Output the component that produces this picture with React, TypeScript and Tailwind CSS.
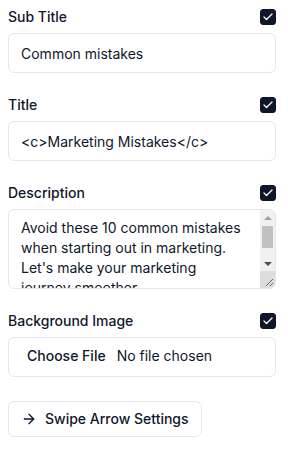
import React, { useState } from 'react';
import { ArrowRight, Check } from 'lucide-react';

function Toggle({ checked, onChange }: { checked: boolean; onChange: () => void }) {
  return (
    <button
      type="button"
      onClick={onChange}
      className={`flex h-4 w-4 items-center justify-center rounded-[3px] border border-[#0f172a] ${checked ? 'bg-[#0f172a]' : 'bg-white'}`}
    >
      {checked && <Check className="h-3 w-3 text-white" strokeWidth={2.5} />}
    </button>
  );
}

function Field({ label, children }: { label: string; children: React.ReactNode }) {
  const [on, setOn] = useState(true);
  return (
    <div className="flex flex-col gap-2">
      <div className="flex h-4 items-center justify-between">
        <span className="text-sm font-medium text-[#0f172a]">{label}</span>
        <Toggle checked={on} onChange={() => setOn(!on)} />
      </div>
      {children}
    </div>
  );
}

// drawn scrollbar, the headless browser only has overlay bars
function FakeScrollbar() {
  return (
    <div className="pointer-events-none absolute top-px right-px bottom-px flex w-[15px] flex-col overflow-hidden rounded-r-[5px] bg-[#f1f1f1]">
      <div className="flex h-[15px] items-center justify-center">
        <svg width="8" height="4" viewBox="0 0 8 4">
          <path d="M0 4 L4 0 L8 4 Z" fill="#a3a3a3" />
        </svg>
      </div>
      <div className="flex-1 px-[2px] pt-px">
        <div className="h-[22px] bg-[#c1c1c1]" />
      </div>
      <div className="flex h-[15px] items-center justify-center">
        <svg width="8" height="4" viewBox="0 0 8 4">
          <path d="M0 0 L8 0 L4 4 Z" fill="#505050" />
        </svg>
      </div>
      <div className="relative h-[17px] bg-[#dcdcdc]">
        <svg className="absolute right-[2px] bottom-[2px]" width="8" height="8" viewBox="0 0 8 8">
          <path d="M1 8 L8 1 M5 8 L8 5" stroke="#6b6b6b" strokeWidth="1" />
        </svg>
      </div>
    </div>
  );
}

const inputCls =
  'h-10 w-full rounded-md border border-[#e2e8f0] bg-white px-3 py-2 text-sm text-[#0f172a] outline-none';

export default function App() {
  const [subTitle, setSubTitle] = useState('Common mistakes');
  const [title, setTitle] = useState('<c>Marketing Mistakes</c>');
  const [desc, setDesc] = useState(
    "Avoid these 10 common mistakes when starting out in marketing. Let's make your marketing journey smoother."
  );

  return (
    <div className="ml-2 flex w-[268px] flex-col gap-6 pt-[9px] font-['Inter',sans-serif]">
      <Field label="Sub Title">
        <input className={inputCls} value={subTitle} onChange={e => setSubTitle(e.target.value)} />
      </Field>
      <Field label="Title">
        <input className={inputCls} value={title} onChange={e => setTitle(e.target.value)} />
      </Field>
      <Field label="Description">
        <div className="relative">
          <textarea
            className="block h-20 w-full resize-none overflow-hidden rounded-md border border-[#e2e8f0] bg-white py-2 pr-[27px] pl-3 text-sm leading-5 text-[#0f172a] outline-none"
            value={desc}
            onChange={e => setDesc(e.target.value)}
          />
          <FakeScrollbar />
        </div>
      </Field>
      <Field label="Background Image">
        <input
          type="file"
          className="h-10 w-full rounded-md border border-[#e2e8f0] bg-white px-3 py-2 text-sm text-[#0f172a] file:mr-[5px] file:border-0 file:bg-transparent file:px-[6px] file:text-sm file:font-medium file:text-[#0f172a]"
        />
      </Field>
      <div>
        <button
          type="button"
          className="flex h-9 items-center gap-2 rounded-md border border-[#e2e8f0] bg-white px-3 text-sm font-medium text-[#0f172a]"
        >
          <ArrowRight className="h-4 w-4" />
          Swipe Arrow Settings
        </button>
      </div>
    </div>
  );
}
